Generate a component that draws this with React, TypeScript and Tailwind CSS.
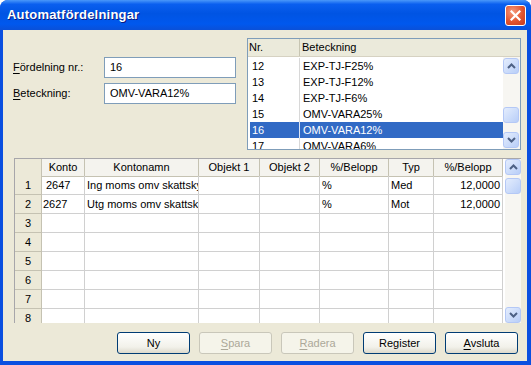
import type { ReactNode } from "react";

const listRows = [
  { nr: "12", name: "EXP-TJ-F25%" },
  { nr: "13", name: "EXP-TJ-F12%" },
  { nr: "14", name: "EXP-TJ-F6%" },
  { nr: "15", name: "OMV-VARA25%" },
  { nr: "16", name: "OMV-VARA12%", selected: true },
  { nr: "17", name: "OMV-VARA6%" },
];

const gridCols = ["Konto", "Kontonamn", "Objekt 1", "Objekt 2", "%/Belopp", "Typ", "%/Belopp"];

type GridRow = { konto: string; kontoPad: string; namn: string; pct: string; typ: string; belopp: string };

const gridRows: (GridRow | null)[] = [
  { konto: "2647", kontoPad: "pl-[4px]", namn: "Ing moms omv skattsky", pct: "%", typ: "Med", belopp: "12,0000" },
  { konto: "2627", kontoPad: "pl-[1px]", namn: "Utg moms omv skattsky", pct: "%", typ: "Mot", belopp: "12,0000" },
  null,
  null,
  null,
  null,
  null,
  null,
];

function Arrow(props: { up?: boolean }) {
  return (
    <svg width="9" height="6" viewBox="0 0 9 6">
      <path
        d={props.up ? "M1 5 L4.5 1.5 L8 5" : "M1 1 L4.5 4.5 L8 1"}
        fill="none"
        stroke="#4D6185"
        strokeWidth="2"
      />
    </svg>
  );
}

function ScrollBtn(props: { up?: boolean; thumb?: boolean }) {
  return (
    <div className="w-[16px] h-[16px] rounded-[3px] border border-[#B4C8F6] bg-[linear-gradient(to_bottom_right,#E4EDFD,#B8CEF8)] flex items-center justify-center">
      {props.thumb ? null : <Arrow up={props.up} />}
    </div>
  );
}

function Mn(props: { children: ReactNode }) {
  return <span className="underline underline-offset-[2px]">{props.children}</span>;
}

function XpButton(props: { children: ReactNode; disabled?: boolean }) {
  return (
    <button
      className={[
        "w-[73px] h-[22px] rounded-[3px] border text-[11px] leading-none",
        props.disabled
          ? "border-[#C9C7BA] bg-[#F5F4EA] text-[#ACA899]"
          : "border-[#003C74] bg-[linear-gradient(to_bottom,#FFFFFF,#F2F1EA_70%,#DCD9CC)] text-black",
      ].join(" ")}
    >
      {props.children}
    </button>
  );
}

export default function App() {
  return (
    <div className="w-[531px] h-[365px] bg-[#0A4FE0] rounded-t-[8px] flex flex-col overflow-hidden font-['Liberation_Sans',Arial,sans-serif] text-[11px] text-black">
      {/* title bar */}
      <div className="h-[30px] shrink-0 flex items-center justify-between pl-[7px] pr-[5px] bg-[linear-gradient(to_bottom,#4A98FA_0%,#0A5FEF_14%,#0054E3_45%,#0058EE_80%,#0A50D8_100%)]">
        <div className="text-white font-bold text-[13px] [text-shadow:1px_1px_0_#0A1A80] tracking-[0.2px]">
          Automatfördelningar
        </div>
        <div className="w-[21px] h-[21px] rounded-[3px] border border-white bg-[radial-gradient(circle_at_35%_30%,#F59A7C,#E2542F_55%,#C63A1C)] flex items-center justify-center">
          <svg width="11" height="11" viewBox="0 0 11 11">
            <path d="M1.5 1.5 L9.5 9.5 M9.5 1.5 L1.5 9.5" stroke="white" strokeWidth="2.2" strokeLinecap="square" />
          </svg>
        </div>
      </div>

      {/* body */}
      <div className="flex-1 ml-[3px] mr-[4px] mb-[4px] bg-[#ECE9D8] pt-[8px] pl-[11px] pr-[6px] flex flex-col">
        <div className="h-[112px] flex">
          <div className="w-[223px] -ml-[1px] pt-[19px] grid grid-cols-[91px_132px] gap-y-[5px] auto-rows-[21px] content-start">
            <div className="flex items-center">
              <span>
                <Mn>F</Mn>ördelning nr.:
              </span>
            </div>
            <div className="border border-[#7F9DB9] bg-white flex items-center pl-[5px]">16</div>
            <div className="flex items-center">
              <span>
                <Mn>B</Mn>eteckning:
              </span>
            </div>
            <div className="border border-[#7F9DB9] bg-white flex items-center pl-[5px]">OMV-VARA12%</div>
          </div>

          <div className="ml-[11px] w-[274px] h-[112px] border border-[#7F9DB9] bg-white flex flex-col overflow-hidden">
            <div className="h-[18px] shrink-0 flex bg-[#EBEADB] border-b border-[#D6D2C2]">
              <div className="w-[52px] border-r border-[#C7C5B2] pl-[1px] flex items-center">Nr.</div>
              <div className="flex-1 pl-[2px] flex items-center">Beteckning</div>
            </div>
            <div className="flex-1 flex min-h-0">
              <div className="flex-1 pt-[1px] overflow-hidden">
                {listRows.map((r) => (
                  <div
                    key={r.nr}
                    className={[
                      "h-[16px] flex items-center ml-[2px]",
                      r.selected ? "bg-[#316AC5] text-white" : "",
                    ].join(" ")}
                  >
                    <div className={["w-[50px] h-full flex items-center pl-[2px] border-r", r.selected ? "border-[#DDE6F5]" : "border-[#D8D8D8]"].join(" ")}>
                      {r.nr}
                    </div>
                    <div className="pl-[3px]">{r.name}</div>
                  </div>
                ))}
              </div>
              <div className="w-[17px] pr-[1px] bg-[#F7F6F2] flex flex-col justify-between pt-[1px] pb-[1px]">
                <div className="flex flex-col">
                  <ScrollBtn up />
                  <div className="h-[33px]" />
                  <ScrollBtn thumb />
                </div>
                <ScrollBtn />
              </div>
            </div>
          </div>
        </div>

        {/* grid */}
        <div className="mt-[8px] h-[165px] w-[507px] flex border-l border-t border-[#A7A6AA] bg-white overflow-hidden">
          <div className="w-[488px] flex flex-col">
            <div className="h-[17px] shrink-0 grid grid-cols-[27px_43px_114px_61px_60px_69px_45px_69px] bg-[#F4F3EE]">
              <div className="bg-[#ECE9D8] border-r border-b border-[#C5C2B2]" />
              {gridCols.map((c, i) => (
                <div key={i} className="border-r border-b border-[#C5C2B2] flex items-center justify-center">
                  {c}
                </div>
              ))}
            </div>
            {gridRows.map((r, i) => (
              <div key={i} className="h-[19px] shrink-0 grid grid-cols-[27px_43px_114px_61px_60px_69px_45px_69px]">
                <div className="bg-[#ECE9D8] border-r border-b border-[#C5C2B2] flex items-center justify-center">
                  {i + 1}
                </div>
                <div className={["border-r border-b border-[#D0D0D0] flex items-center", r ? r.kontoPad : ""].join(" ")}>
                  {r?.konto}
                </div>
                <div className="border-r border-b border-[#D0D0D0] flex items-center pl-[2px] overflow-hidden whitespace-nowrap">
                  {r?.namn}
                </div>
                <div className="border-r border-b border-[#D0D0D0]" />
                <div className="border-r border-b border-[#D0D0D0]" />
                <div className="border-r border-b border-[#D0D0D0] flex items-center pl-[2px]">{r?.pct}</div>
                <div className="border-r border-b border-[#D0D0D0] flex items-center pl-[2px]">{r?.typ}</div>
                <div className="border-r border-b border-[#D0D0D0] flex items-center justify-end pr-[2px]">
                  {r?.belopp}
                </div>
              </div>
            ))}
          </div>
          <div className="w-[3px]" />
          <div className="w-[16px] bg-[#F7F6F2] flex flex-col justify-between">
            <div className="flex flex-col gap-[3px]">
              <ScrollBtn up />
              <ScrollBtn thumb />
            </div>
            <ScrollBtn />
          </div>
        </div>

        {/* buttons */}
        <div className="mt-[9px] flex gap-[9px] pl-[103px]">
          <XpButton>Ny</XpButton>
          <XpButton disabled>
            <Mn>S</Mn>para
          </XpButton>
          <XpButton disabled>
            <Mn>R</Mn>adera
          </XpButton>
          <XpButton>Register</XpButton>
          <XpButton>
            <Mn>A</Mn>vsluta
          </XpButton>
        </div>
      </div>
    </div>
  );
}
